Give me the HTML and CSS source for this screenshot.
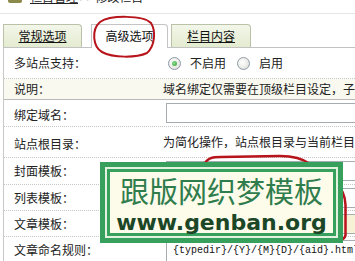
FILE: index.html
```html
<!DOCTYPE html>
<html lang="zh">
<head>
<meta charset="utf-8">
<link rel="stylesheet" href="styles.css">
</head>
<body>
<div class="page">
  <div class="crumb">
    <div class="crumb-line">
      <span class="crumb-icon"></span>
      <span class="crumb-link">栏目管理</span>
      <span class="crumb-sep">&gt;&gt;</span>
      <span class="crumb-text">修改栏目</span>
    </div>
  </div>

  <div class="tabs">
    <div class="tab tab-1"><span class="tab-link">常规选项</span></div>
    <div class="tab tab-active">高级选项</div>
    <div class="tab tab-3"><span class="tab-link">栏目内容</span></div>
  </div>

  <div class="form">
    <div class="row row-1">
      <div class="label">多站点支持：</div>
      <div class="value radios">
        <span class="radio radio-on"></span><span class="radio-text">不启用</span>
        <span class="radio"></span><span class="radio-text">启用</span>
      </div>
    </div>
    <div class="row row-2">
      <div class="label">说明：</div>
      <div class="value">域名绑定仅需要在顶级栏目设定，子栏目无需更改</div>
    </div>
    <div class="row row-3">
      <div class="label label-low">绑定域名：</div>
      <div class="value"><span class="input"></span></div>
    </div>
    <div class="row row-4">
      <div class="label label-low">站点根目录：</div>
      <div class="value">为简化操作，站点根目录与当前栏目目录一致</div>
    </div>
    <div class="row row-5">
      <div class="label">封面模板：</div>
      <div class="value"><span class="input"></span></div>
    </div>
    <div class="row row-6">
      <div class="label">列表模板：</div>
      <div class="value"><span class="input"></span></div>
    </div>
    <div class="row row-7">
      <div class="label">文章模板：</div>
      <div class="value"><span class="input input-warm"></span></div>
    </div>
    <div class="row row-8">
      <div class="label">文章命名规则：</div>
      <div class="value"><span class="input input-code">{typedir}/{Y}/{M}{D}/{aid}.html</span></div>
    </div>
  </div>

  <svg class="marks" width="355" height="261" viewBox="0 0 355 261">
    <path d="M100 22 C110 15 143 15 151 23 C156 31 155 46 147 53 C136 58 113 58 102 52 C93 47 91 30 100 22" fill="none" stroke="#b8141c" stroke-width="2"/>
    <path d="M204 165 C207 158 212 157 221 157 L280 156 C292 156 302 158 310 164 C330 174 345 186 345.5 205 L345.5 235 C345 238 342 240 338 240" fill="none" stroke="#b8141c" stroke-width="2.5"/>
  </svg>

  <div class="watermark">
    <div class="wm-inner">
      <div class="wm-cn">跟版网织梦模板</div>
      <div class="wm-url">www.genban.org</div>
    </div>
  </div>
</div>
</body>
</html>
```

FILE: styles.css
```css
* { box-sizing: border-box; }

body {
  margin: 0;
  background: #ffffff;
  font-family: "Noto Sans CJK SC", "Noto Sans", sans-serif;
  font-size: 12px;
  color: #222222;
}

.page {
  position: relative;
  width: 355px;
  height: 261px;
  overflow: hidden;
}

/* breadcrumb (cut at top) */
.crumb {
  height: 14px;
  border-bottom: 1px solid #e6e6e6;
  overflow: hidden;
}
.crumb-line {
  display: flex;
  align-items: flex-end;
  height: 12px;
  line-height: 12px;
  margin-top: -9px;
  padding-left: 8px;
  white-space: nowrap;
}
.crumb-icon {
  width: 14px;
  height: 10px;
  background: #8c8a4a;
  border-radius: 2px;
  margin-right: 8px;
}
.crumb-link { text-decoration: underline; }
.crumb-sep { margin: 0 2px 0 2px; color: #444; }

/* tabs */
.tabs {
  display: flex;
  align-items: flex-end;
  height: 23px;
  margin-top: 10px;
  padding-left: 3px;
}
.tab {
  height: 23px;
  display: flex;
  align-items: center;
  justify-content: center;
  line-height: 12px;
  border: 1px solid #b9c2a6;
  border-bottom: none;
  border-radius: 0 4px 0 0;
  background: linear-gradient(#f3f6ea, #e3ebcf);
  color: #111;
}
.tab-link { text-decoration: underline; }
.tab-1 { width: 79px; }
.tab-active {
  width: 77px;
  height: 24px;
  margin-left: 9px;
  margin-bottom: -1px;
  background: #ffffff;
  border-color: #c4c4c4;
  position: relative;
  z-index: 1;
  padding-bottom: 1px;
}
.tab-3 { width: 80px; margin-left: 3px; }

/* form table */
.form {
  margin-left: 3px;
  border-left: 1px solid #c9c9c9;
  border-top: 1px solid #c2c2c2;
}
.row {
  display: grid;
  grid-template-columns: 159px 1fr;
  align-items: center;
  border-bottom: 1px dotted #c6c6c6;
  white-space: nowrap;
  overflow: hidden;
}
.label {
  padding-left: 10px;
  line-height: 12px;
}
.label-low { padding-top: 4px; }
.value {
  line-height: 12px;
  overflow: hidden;
}
.row-1 { height: 31px; }
.row-2 { height: 21px; background: #f9f9ef; border-bottom: 1px solid #b9b9b9; }
.row-3 { height: 27px; }
.row-4 { height: 31px; }
.row-5 { height: 27px; }
.row-6 { height: 26px; }
.row-7 { height: 26px; }
.row-8 { height: 26px; }

.radios {
  display: flex;
  align-items: center;
  padding-left: 5px;
}
.radio {
  width: 13px;
  height: 13px;
  border-radius: 50%;
  border: 1px solid #8d9aa8;
  background: radial-gradient(circle at 40% 40%, #ffffff 0%, #e9e9e4 60%, #cfd0c8 100%);
  display: flex;
  align-items: center;
  justify-content: center;
}
.radio-on::after {
  content: "";
  width: 5px;
  height: 5px;
  border-radius: 50%;
  background: radial-gradient(circle at 40% 40%, #8fe08f, #2c9a2c);
}
.radio-text { margin: 0 11px 0 9px; }

.input {
  display: block;
  width: 220px;
  height: 20px;
  margin-left: 3px;
  border: 1px solid #a5acb2;
  background: #ffffff;
}
.input-warm { background: #f7f1d6; }
.input-code {
  height: 22px;
  margin-top: 2px;
  padding-left: 6px;
  font-family: "Liberation Mono", monospace;
  font-size: 10px;
  line-height: 20px;
  color: #111;
}

/* red annotations */
.marks {
  position: absolute;
  left: 0;
  top: 0;
  z-index: 2;
  pointer-events: none;
}

/* watermark */
.watermark {
  position: absolute;
  left: 100px;
  top: 162px;
  width: 243px;
  height: 81px;
  z-index: 3;
  border: 5px solid #36a05c;
  padding: 2px;
  background: #e3f2de;
}
.wm-inner {
  height: 100%;
  border: 3px solid #36a05c;
  background: #fdfbea;
  text-align: center;
}
.wm-cn {
  margin-top: 4px;
  font-family: "Noto Sans CJK SC", sans-serif;
  font-size: 29px;
  line-height: 29px;
  color: #2f7c4d;
  white-space: nowrap;
}
.wm-url {
  margin-top: 7px;
  font-family: "DejaVu Sans", sans-serif;
  font-weight: bold;
  font-size: 22px;
  line-height: 22px;
  color: #1b4727;
  white-space: nowrap;
}
```
